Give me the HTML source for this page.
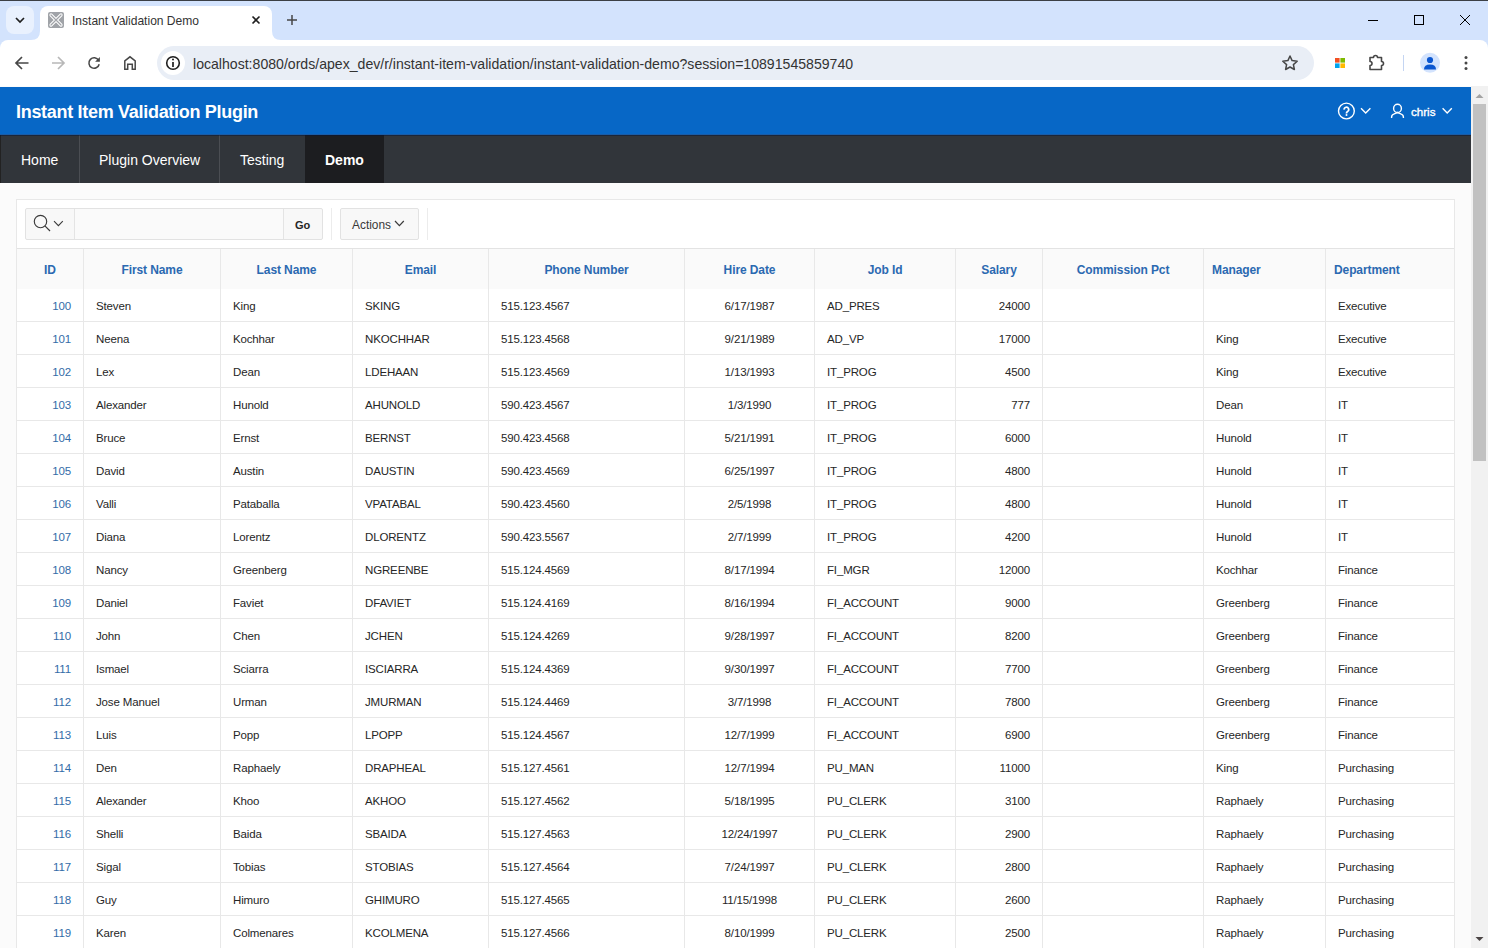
<!DOCTYPE html>
<html><head><meta charset="utf-8"><title>Instant Validation Demo</title>
<style>
*{box-sizing:border-box}
html,body{margin:0;padding:0}
body{width:1488px;height:948px;overflow:hidden;position:relative;background:#fbfbfb;font-family:"Liberation Sans",sans-serif;}
.abs{position:absolute}
/* browser chrome */
#tabstrip{position:absolute;left:0;top:0;width:1488px;height:56px;background:#d3e3fd;border-top:1px solid #3b3f45}
#tabdd{position:absolute;left:6px;top:6px;width:28px;height:28px;border-radius:8px;background:#e9f1fe}
#tab{position:absolute;left:40px;top:6px;width:232px;height:34px;background:#fff;border-radius:8px 8px 0 0}
#toolbar{position:absolute;left:0;top:40px;width:1488px;height:46px;background:#fff;border-radius:8px 8px 0 0}
#omni{position:absolute;left:157px;top:46px;width:1157px;height:34px;border-radius:17px;background:#e9eef6}
#infoc{position:absolute;left:161px;top:51px;width:24px;height:24px;border-radius:12px;background:#fff}
.url{position:absolute;left:193px;top:55px;font-size:14.1px;color:#333;white-space:nowrap;line-height:18px}
.tabtitle{position:absolute;left:72px;top:13px;font-size:12.05px;color:#333;white-space:nowrap;line-height:16px}
/* apex */
#hdr{position:absolute;left:0;top:87px;width:1471px;height:48px;background:#0767c6}
.title{position:absolute;left:16px;top:100px;font-size:18px;letter-spacing:-0.3px;font-weight:700;color:#fff;white-space:nowrap;line-height:24px}
#nav{position:absolute;left:0;top:135px;width:1471px;height:48px;background:#31353a;border-left:1px solid #222}
.nav{position:absolute;top:136px;height:48px;line-height:48px;font-size:14px;color:#fff;white-space:nowrap}
.navsep{position:absolute;top:135px;width:1px;height:48px;background:#4b4e53}
#scroll{position:absolute;left:1471px;top:86px;width:17px;height:862px;background:#f1f1f1}
#thumb{position:absolute;left:1473px;top:104px;width:13px;height:357px;background:#c1c1c1}
#region{position:absolute;left:16px;top:199px;width:1439px;height:760px;background:#fff;border:1px solid #e8e8e8}
.tbar-b{position:absolute;left:17px;top:248px;width:1437px;height:1px;background:#e3e3e3}
.btn{position:absolute;background:#f8f8f8;border:1px solid #e2e2e2;border-radius:2px}
.tsep{position:absolute;top:208px;width:1px;height:32px;background:#ececec}
.hbg{position:absolute;background:#fafafa}
.vl{position:absolute;width:1px;background:#e8e8e8}
.hl{position:absolute;height:1px;background:#e8e8e8}
.th{position:absolute;top:250px;height:40px;line-height:40px;font-size:12px;letter-spacing:-0.1px;font-weight:700;color:#2b69b1;white-space:nowrap}
.td{position:absolute;height:32px;line-height:33px;margin-top:1px;font-size:11.5px;letter-spacing:-0.15px;color:#262626;white-space:nowrap}
.td.id{color:#336ca8}

</style></head><body>
<div id="tabstrip"></div>
<div id="tabdd"></div>
<svg class="abs" style="left:0;top:0" width="1488" height="86" viewBox="0 0 1488 86">
  <!-- tab flares -->
  <path d="M31 40 Q40 40 40 31 L40 40 Z" fill="#fff"/>
  <path d="M281 40 Q272 40 272 31 L272 40 Z" fill="#fff"/>
  <!-- dropdown chevron -->
  <path d="M16 18 L20 22 L24 18" fill="none" stroke="#1f1f1f" stroke-width="1.7"/>
  <!-- new tab plus -->
  <path d="M292 15 V25 M287 20 H297" stroke="#474747" stroke-width="1.5"/>
  <!-- window controls -->
  <path d="M1368 20.5 H1378" stroke="#000" stroke-width="1"/>
  <rect x="1414.5" y="15.5" width="9" height="9" fill="none" stroke="#000" stroke-width="1"/>
  <path d="M1460 15 L1470 25 M1470 15 L1460 25" stroke="#000" stroke-width="1"/>
</svg>
<div id="tab"></div>
<div class="tabtitle">Instant Validation Demo</div>
<div id="toolbar"></div>
<div id="omni"></div>
<div id="infoc"></div>
<svg class="abs" style="left:0;top:0" width="1488" height="86" viewBox="0 0 1488 86">
  <!-- favicon -->
  <rect x="48" y="12" width="16" height="16" rx="2" fill="#a0a3a8"/>
  <path d="M51 15 L61 25 M61 15 L51 25" stroke="#fff" stroke-width="3.2" stroke-linecap="round"/>
  <path d="M51 15 L61 25 M61 15 L51 25" stroke="#a0a3a8" stroke-width="1.2" stroke-linecap="round"/>
  <!-- close x -->
  <path d="M252.5 16.5 L259.5 23.5 M259.5 16.5 L252.5 23.5" stroke="#1f1f1f" stroke-width="1.6"/>
  <!-- back -->
  <path d="M16.5 63 H28.5 M22 57 L16 63 L22 69" fill="none" stroke="#474747" stroke-width="1.7"/>
  <!-- forward -->
  <path d="M52 63 H64 M58 57 L64 63 L58 69" fill="none" stroke="#b8b8b8" stroke-width="1.7"/>
  <!-- reload -->
  <path d="M98.6 60.3 A5.2 5.2 0 1 0 99.2 64.2" fill="none" stroke="#474747" stroke-width="1.5"/>
  <path d="M99.9 57 V61.8 H95.1 Z" fill="#474747"/>
  <!-- home -->
  <path d="M124.8 69.2 V60.8 L130 56.8 L135.2 60.8 V69.2 H132.3 V64.3 H127.7 V69.2 Z" fill="none" stroke="#474747" stroke-width="1.5"/>
  <!-- info -->
  <circle cx="173" cy="63" r="6.3" fill="none" stroke="#1f1f1f" stroke-width="1.6"/>
  <path d="M173 62 V67" stroke="#1f1f1f" stroke-width="1.7"/>
  <circle cx="173" cy="59.6" r="1" fill="#1f1f1f"/>
  <!-- star -->
  <path d="M1290 56 L1292.1 60.6 L1297.2 61.2 L1293.4 64.6 L1294.4 69.5 L1290 67 L1285.6 69.5 L1286.6 64.6 L1282.8 61.2 L1287.9 60.6 Z" fill="none" stroke="#474747" stroke-width="1.5" stroke-linejoin="round"/>
  <!-- ms logo -->
  <rect x="1335" y="58" width="4.6" height="4.6" fill="#f25022"/>
  <rect x="1340.4" y="58" width="4.6" height="4.6" fill="#7fba00"/>
  <rect x="1335" y="63.4" width="4.6" height="4.6" fill="#00a4ef"/>
  <rect x="1340.4" y="63.4" width="4.6" height="4.6" fill="#ffb900"/>
  <!-- puzzle -->
  <path d="M1370 57.5 H1373.5 A2 2 0 0 1 1377.5 57.5 H1381.5 V61.5 A2 2 0 0 1 1381.5 65.5 V69.5 H1370 V65.5 A2 2 0 0 0 1370 61.5 Z" fill="none" stroke="#474747" stroke-width="1.6" stroke-linejoin="round"/>
  <!-- separator -->
  <path d="M1403.5 55 V71" stroke="#c4d5f2" stroke-width="1"/>
  <!-- avatar -->
  <circle cx="1430" cy="62.7" r="10" fill="#d3e3fd"/>
  <circle cx="1430" cy="60" r="3.1" fill="#0b57d0"/>
  <path d="M1424 69.5 Q1424 64.6 1430 64.6 Q1436 64.6 1436 69.5 Z" fill="#0b57d0"/>
  <!-- kebab -->
  <circle cx="1466" cy="57.6" r="1.5" fill="#474747"/>
  <circle cx="1466" cy="63" r="1.5" fill="#474747"/>
  <circle cx="1466" cy="68.4" r="1.5" fill="#474747"/>
</svg>
<div class="url">localhost:8080/ords/apex_dev/r/instant-item-validation/instant-validation-demo?session=10891545859740</div>
<div id="hdr"></div>
<div class="title">Instant Item Validation Plugin</div>
<svg class="abs" style="left:1300px;top:87px" width="171" height="48" viewBox="1300 87 171 48">
  <circle cx="1346.4" cy="111" r="7.9" fill="none" stroke="#fff" stroke-width="1.4"/>
  <path d="M1344.2 109.7 A2.25 2.25 0 1 1 1347.6 111.4 Q1346.5 112 1346.5 113.1 V113.4" fill="none" stroke="#fff" stroke-width="1.7"/>
  <circle cx="1346.5" cy="115" r="1" fill="#fff"/>
  <path d="M1361 108.3 L1365.7 113 L1370.4 108.3" fill="none" stroke="#fff" stroke-width="1.4"/>
  <ellipse cx="1397.5" cy="108.4" rx="3.9" ry="4.1" fill="none" stroke="#fff" stroke-width="1.4"/>
  <path d="M1391.6 118 V117 Q1391.6 114.8 1394.2 113.9 L1397.5 112.6 L1400.8 113.9 Q1403.4 114.8 1403.4 117 V118" fill="none" stroke="#fff" stroke-width="1.4"/>
  <path d="M1442.6 108.3 L1447.2 113 L1451.8 108.3" fill="none" stroke="#fff" stroke-width="1.4"/>
</svg>
<div class="abs" style="left:1411px;top:104px;font-size:11.6px;color:#fff;line-height:16px;-webkit-text-stroke:0.35px #fff">chris</div>
<div id="nav"></div>
<div class="abs" style="left:0;top:134px;width:1471px;height:1px;background:#1a5ca6"></div>
<div class="nav" style="left:21px">Home</div>
<div class="navsep" style="left:79px"></div>
<div class="nav" style="left:99px">Plugin Overview</div>
<div class="navsep" style="left:219px"></div>
<div class="nav" style="left:240px">Testing</div>
<div class="abs" style="left:305px;top:135px;width:79px;height:48px;background:#1c1d20"></div>
<div class="nav" style="left:325px;font-weight:700">Demo</div>
<div class="abs" style="left:0;top:135px;width:1471px;height:1px;background:rgba(0,20,60,0.45)"></div>
<div id="scroll"></div>
<div id="thumb"></div>
<svg class="abs" style="left:1471px;top:86px" width="17" height="862" viewBox="0 0 17 862">
  <path d="M4.5 12 L8.5 8 L12.5 12 Z" fill="#a3a3a3"/>
  <path d="M4.5 851 L8.5 855 L12.5 851 Z" fill="#4a4444"/>
</svg>
<div id="region"></div>
<div class="btn" style="left:25px;top:208px;width:298px;height:32px;background:#f8f8f8"></div>
<div class="abs" style="left:74px;top:209px;width:210px;height:30px;background:#fafafa;border-left:1px solid #e4e4e4;border-right:1px solid #e4e4e4"></div>
<svg class="abs" style="left:25px;top:208px" width="60" height="32" viewBox="25 208 60 32">
  <circle cx="40.5" cy="221.5" r="6.2" fill="none" stroke="#3a3a3a" stroke-width="1.15"/>
  <path d="M44.9 225.9 L50 231" stroke="#3a3a3a" stroke-width="1.2"/>
  <path d="M54 221.2 L58.4 225.6 L62.8 221.2" fill="none" stroke="#3a3a3a" stroke-width="1.1"/>
</svg>
<div class="abs" style="left:295px;top:209px;height:32px;line-height:32px;font-size:11px;font-weight:700;color:#262626">Go</div>
<div class="tsep" style="left:331px"></div>
<div class="btn" style="left:340px;top:208px;width:79px;height:32px"></div>
<div class="abs" style="left:352px;top:209px;height:32px;line-height:32px;font-size:11.9px;color:#383838">Actions</div>
<svg class="abs" style="left:390px;top:215px" width="20" height="16" viewBox="390 215 20 16">
  <path d="M395 221 L399.4 225.6 L403.8 221" fill="none" stroke="#3a3a3a" stroke-width="1.2"/>
</svg>
<div class="tsep" style="left:427px"></div>
<div class="tbar-b"></div>

<div class="tbl">
<div class="hbg" style="left:17px;top:249px;width:1437px;height:40px"></div>
<div class="vl" style="left:83px;top:249px;height:699px"></div>
<div class="vl" style="left:220px;top:249px;height:699px"></div>
<div class="vl" style="left:352px;top:249px;height:699px"></div>
<div class="vl" style="left:488px;top:249px;height:699px"></div>
<div class="vl" style="left:684px;top:249px;height:699px"></div>
<div class="vl" style="left:814px;top:249px;height:699px"></div>
<div class="vl" style="left:955px;top:249px;height:699px"></div>
<div class="vl" style="left:1042px;top:249px;height:699px"></div>
<div class="vl" style="left:1203px;top:249px;height:699px"></div>
<div class="vl" style="left:1325px;top:249px;height:699px"></div>
<div class="hl" style="left:17px;top:321px;width:1437px"></div>
<div class="hl" style="left:17px;top:354px;width:1437px"></div>
<div class="hl" style="left:17px;top:387px;width:1437px"></div>
<div class="hl" style="left:17px;top:420px;width:1437px"></div>
<div class="hl" style="left:17px;top:453px;width:1437px"></div>
<div class="hl" style="left:17px;top:486px;width:1437px"></div>
<div class="hl" style="left:17px;top:519px;width:1437px"></div>
<div class="hl" style="left:17px;top:552px;width:1437px"></div>
<div class="hl" style="left:17px;top:585px;width:1437px"></div>
<div class="hl" style="left:17px;top:618px;width:1437px"></div>
<div class="hl" style="left:17px;top:651px;width:1437px"></div>
<div class="hl" style="left:17px;top:684px;width:1437px"></div>
<div class="hl" style="left:17px;top:717px;width:1437px"></div>
<div class="hl" style="left:17px;top:750px;width:1437px"></div>
<div class="hl" style="left:17px;top:783px;width:1437px"></div>
<div class="hl" style="left:17px;top:816px;width:1437px"></div>
<div class="hl" style="left:17px;top:849px;width:1437px"></div>
<div class="hl" style="left:17px;top:882px;width:1437px"></div>
<div class="hl" style="left:17px;top:915px;width:1437px"></div>
<div class="th" style="left:17px;width:66px;text-align:center">ID</div>
<div class="th" style="left:84px;width:136px;text-align:center">First Name</div>
<div class="th" style="left:221px;width:131px;text-align:center">Last Name</div>
<div class="th" style="left:353px;width:135px;text-align:center">Email</div>
<div class="th" style="left:489px;width:195px;text-align:center">Phone Number</div>
<div class="th" style="left:685px;width:129px;text-align:center">Hire Date</div>
<div class="th" style="left:815px;width:140px;text-align:center">Job Id</div>
<div class="th" style="left:956px;width:86px;text-align:center">Salary</div>
<div class="th" style="left:1043px;width:160px;text-align:center">Commission Pct</div>
<div class="th" style="left:1212px;width:113px;text-align:left">Manager</div>
<div class="th" style="left:1334px;width:120px;text-align:left">Department</div>
<div class="td id" style="top:289px;left:17px;width:54px;text-align:right">100</div>
<div class="td" style="top:289px;left:96px;width:124px">Steven</div>
<div class="td" style="top:289px;left:233px;width:119px">King</div>
<div class="td" style="top:289px;left:365px;width:123px">SKING</div>
<div class="td" style="top:289px;left:501px;width:183px">515.123.4567</div>
<div class="td" style="top:289px;left:685px;width:129px;text-align:center">6/17/1987</div>
<div class="td" style="top:289px;left:827px;width:128px">AD_PRES</div>
<div class="td" style="top:289px;left:956px;width:74px;text-align:right">24000</div>
<div class="td" style="top:289px;left:1338px;width:116px">Executive</div>
<div class="td id" style="top:322px;left:17px;width:54px;text-align:right">101</div>
<div class="td" style="top:322px;left:96px;width:124px">Neena</div>
<div class="td" style="top:322px;left:233px;width:119px">Kochhar</div>
<div class="td" style="top:322px;left:365px;width:123px">NKOCHHAR</div>
<div class="td" style="top:322px;left:501px;width:183px">515.123.4568</div>
<div class="td" style="top:322px;left:685px;width:129px;text-align:center">9/21/1989</div>
<div class="td" style="top:322px;left:827px;width:128px">AD_VP</div>
<div class="td" style="top:322px;left:956px;width:74px;text-align:right">17000</div>
<div class="td" style="top:322px;left:1216px;width:109px">King</div>
<div class="td" style="top:322px;left:1338px;width:116px">Executive</div>
<div class="td id" style="top:355px;left:17px;width:54px;text-align:right">102</div>
<div class="td" style="top:355px;left:96px;width:124px">Lex</div>
<div class="td" style="top:355px;left:233px;width:119px">Dean</div>
<div class="td" style="top:355px;left:365px;width:123px">LDEHAAN</div>
<div class="td" style="top:355px;left:501px;width:183px">515.123.4569</div>
<div class="td" style="top:355px;left:685px;width:129px;text-align:center">1/13/1993</div>
<div class="td" style="top:355px;left:827px;width:128px">IT_PROG</div>
<div class="td" style="top:355px;left:956px;width:74px;text-align:right">4500</div>
<div class="td" style="top:355px;left:1216px;width:109px">King</div>
<div class="td" style="top:355px;left:1338px;width:116px">Executive</div>
<div class="td id" style="top:388px;left:17px;width:54px;text-align:right">103</div>
<div class="td" style="top:388px;left:96px;width:124px">Alexander</div>
<div class="td" style="top:388px;left:233px;width:119px">Hunold</div>
<div class="td" style="top:388px;left:365px;width:123px">AHUNOLD</div>
<div class="td" style="top:388px;left:501px;width:183px">590.423.4567</div>
<div class="td" style="top:388px;left:685px;width:129px;text-align:center">1/3/1990</div>
<div class="td" style="top:388px;left:827px;width:128px">IT_PROG</div>
<div class="td" style="top:388px;left:956px;width:74px;text-align:right">777</div>
<div class="td" style="top:388px;left:1216px;width:109px">Dean</div>
<div class="td" style="top:388px;left:1338px;width:116px">IT</div>
<div class="td id" style="top:421px;left:17px;width:54px;text-align:right">104</div>
<div class="td" style="top:421px;left:96px;width:124px">Bruce</div>
<div class="td" style="top:421px;left:233px;width:119px">Ernst</div>
<div class="td" style="top:421px;left:365px;width:123px">BERNST</div>
<div class="td" style="top:421px;left:501px;width:183px">590.423.4568</div>
<div class="td" style="top:421px;left:685px;width:129px;text-align:center">5/21/1991</div>
<div class="td" style="top:421px;left:827px;width:128px">IT_PROG</div>
<div class="td" style="top:421px;left:956px;width:74px;text-align:right">6000</div>
<div class="td" style="top:421px;left:1216px;width:109px">Hunold</div>
<div class="td" style="top:421px;left:1338px;width:116px">IT</div>
<div class="td id" style="top:454px;left:17px;width:54px;text-align:right">105</div>
<div class="td" style="top:454px;left:96px;width:124px">David</div>
<div class="td" style="top:454px;left:233px;width:119px">Austin</div>
<div class="td" style="top:454px;left:365px;width:123px">DAUSTIN</div>
<div class="td" style="top:454px;left:501px;width:183px">590.423.4569</div>
<div class="td" style="top:454px;left:685px;width:129px;text-align:center">6/25/1997</div>
<div class="td" style="top:454px;left:827px;width:128px">IT_PROG</div>
<div class="td" style="top:454px;left:956px;width:74px;text-align:right">4800</div>
<div class="td" style="top:454px;left:1216px;width:109px">Hunold</div>
<div class="td" style="top:454px;left:1338px;width:116px">IT</div>
<div class="td id" style="top:487px;left:17px;width:54px;text-align:right">106</div>
<div class="td" style="top:487px;left:96px;width:124px">Valli</div>
<div class="td" style="top:487px;left:233px;width:119px">Pataballa</div>
<div class="td" style="top:487px;left:365px;width:123px">VPATABAL</div>
<div class="td" style="top:487px;left:501px;width:183px">590.423.4560</div>
<div class="td" style="top:487px;left:685px;width:129px;text-align:center">2/5/1998</div>
<div class="td" style="top:487px;left:827px;width:128px">IT_PROG</div>
<div class="td" style="top:487px;left:956px;width:74px;text-align:right">4800</div>
<div class="td" style="top:487px;left:1216px;width:109px">Hunold</div>
<div class="td" style="top:487px;left:1338px;width:116px">IT</div>
<div class="td id" style="top:520px;left:17px;width:54px;text-align:right">107</div>
<div class="td" style="top:520px;left:96px;width:124px">Diana</div>
<div class="td" style="top:520px;left:233px;width:119px">Lorentz</div>
<div class="td" style="top:520px;left:365px;width:123px">DLORENTZ</div>
<div class="td" style="top:520px;left:501px;width:183px">590.423.5567</div>
<div class="td" style="top:520px;left:685px;width:129px;text-align:center">2/7/1999</div>
<div class="td" style="top:520px;left:827px;width:128px">IT_PROG</div>
<div class="td" style="top:520px;left:956px;width:74px;text-align:right">4200</div>
<div class="td" style="top:520px;left:1216px;width:109px">Hunold</div>
<div class="td" style="top:520px;left:1338px;width:116px">IT</div>
<div class="td id" style="top:553px;left:17px;width:54px;text-align:right">108</div>
<div class="td" style="top:553px;left:96px;width:124px">Nancy</div>
<div class="td" style="top:553px;left:233px;width:119px">Greenberg</div>
<div class="td" style="top:553px;left:365px;width:123px">NGREENBE</div>
<div class="td" style="top:553px;left:501px;width:183px">515.124.4569</div>
<div class="td" style="top:553px;left:685px;width:129px;text-align:center">8/17/1994</div>
<div class="td" style="top:553px;left:827px;width:128px">FI_MGR</div>
<div class="td" style="top:553px;left:956px;width:74px;text-align:right">12000</div>
<div class="td" style="top:553px;left:1216px;width:109px">Kochhar</div>
<div class="td" style="top:553px;left:1338px;width:116px">Finance</div>
<div class="td id" style="top:586px;left:17px;width:54px;text-align:right">109</div>
<div class="td" style="top:586px;left:96px;width:124px">Daniel</div>
<div class="td" style="top:586px;left:233px;width:119px">Faviet</div>
<div class="td" style="top:586px;left:365px;width:123px">DFAVIET</div>
<div class="td" style="top:586px;left:501px;width:183px">515.124.4169</div>
<div class="td" style="top:586px;left:685px;width:129px;text-align:center">8/16/1994</div>
<div class="td" style="top:586px;left:827px;width:128px">FI_ACCOUNT</div>
<div class="td" style="top:586px;left:956px;width:74px;text-align:right">9000</div>
<div class="td" style="top:586px;left:1216px;width:109px">Greenberg</div>
<div class="td" style="top:586px;left:1338px;width:116px">Finance</div>
<div class="td id" style="top:619px;left:17px;width:54px;text-align:right">110</div>
<div class="td" style="top:619px;left:96px;width:124px">John</div>
<div class="td" style="top:619px;left:233px;width:119px">Chen</div>
<div class="td" style="top:619px;left:365px;width:123px">JCHEN</div>
<div class="td" style="top:619px;left:501px;width:183px">515.124.4269</div>
<div class="td" style="top:619px;left:685px;width:129px;text-align:center">9/28/1997</div>
<div class="td" style="top:619px;left:827px;width:128px">FI_ACCOUNT</div>
<div class="td" style="top:619px;left:956px;width:74px;text-align:right">8200</div>
<div class="td" style="top:619px;left:1216px;width:109px">Greenberg</div>
<div class="td" style="top:619px;left:1338px;width:116px">Finance</div>
<div class="td id" style="top:652px;left:17px;width:54px;text-align:right">111</div>
<div class="td" style="top:652px;left:96px;width:124px">Ismael</div>
<div class="td" style="top:652px;left:233px;width:119px">Sciarra</div>
<div class="td" style="top:652px;left:365px;width:123px">ISCIARRA</div>
<div class="td" style="top:652px;left:501px;width:183px">515.124.4369</div>
<div class="td" style="top:652px;left:685px;width:129px;text-align:center">9/30/1997</div>
<div class="td" style="top:652px;left:827px;width:128px">FI_ACCOUNT</div>
<div class="td" style="top:652px;left:956px;width:74px;text-align:right">7700</div>
<div class="td" style="top:652px;left:1216px;width:109px">Greenberg</div>
<div class="td" style="top:652px;left:1338px;width:116px">Finance</div>
<div class="td id" style="top:685px;left:17px;width:54px;text-align:right">112</div>
<div class="td" style="top:685px;left:96px;width:124px">Jose Manuel</div>
<div class="td" style="top:685px;left:233px;width:119px">Urman</div>
<div class="td" style="top:685px;left:365px;width:123px">JMURMAN</div>
<div class="td" style="top:685px;left:501px;width:183px">515.124.4469</div>
<div class="td" style="top:685px;left:685px;width:129px;text-align:center">3/7/1998</div>
<div class="td" style="top:685px;left:827px;width:128px">FI_ACCOUNT</div>
<div class="td" style="top:685px;left:956px;width:74px;text-align:right">7800</div>
<div class="td" style="top:685px;left:1216px;width:109px">Greenberg</div>
<div class="td" style="top:685px;left:1338px;width:116px">Finance</div>
<div class="td id" style="top:718px;left:17px;width:54px;text-align:right">113</div>
<div class="td" style="top:718px;left:96px;width:124px">Luis</div>
<div class="td" style="top:718px;left:233px;width:119px">Popp</div>
<div class="td" style="top:718px;left:365px;width:123px">LPOPP</div>
<div class="td" style="top:718px;left:501px;width:183px">515.124.4567</div>
<div class="td" style="top:718px;left:685px;width:129px;text-align:center">12/7/1999</div>
<div class="td" style="top:718px;left:827px;width:128px">FI_ACCOUNT</div>
<div class="td" style="top:718px;left:956px;width:74px;text-align:right">6900</div>
<div class="td" style="top:718px;left:1216px;width:109px">Greenberg</div>
<div class="td" style="top:718px;left:1338px;width:116px">Finance</div>
<div class="td id" style="top:751px;left:17px;width:54px;text-align:right">114</div>
<div class="td" style="top:751px;left:96px;width:124px">Den</div>
<div class="td" style="top:751px;left:233px;width:119px">Raphaely</div>
<div class="td" style="top:751px;left:365px;width:123px">DRAPHEAL</div>
<div class="td" style="top:751px;left:501px;width:183px">515.127.4561</div>
<div class="td" style="top:751px;left:685px;width:129px;text-align:center">12/7/1994</div>
<div class="td" style="top:751px;left:827px;width:128px">PU_MAN</div>
<div class="td" style="top:751px;left:956px;width:74px;text-align:right">11000</div>
<div class="td" style="top:751px;left:1216px;width:109px">King</div>
<div class="td" style="top:751px;left:1338px;width:116px">Purchasing</div>
<div class="td id" style="top:784px;left:17px;width:54px;text-align:right">115</div>
<div class="td" style="top:784px;left:96px;width:124px">Alexander</div>
<div class="td" style="top:784px;left:233px;width:119px">Khoo</div>
<div class="td" style="top:784px;left:365px;width:123px">AKHOO</div>
<div class="td" style="top:784px;left:501px;width:183px">515.127.4562</div>
<div class="td" style="top:784px;left:685px;width:129px;text-align:center">5/18/1995</div>
<div class="td" style="top:784px;left:827px;width:128px">PU_CLERK</div>
<div class="td" style="top:784px;left:956px;width:74px;text-align:right">3100</div>
<div class="td" style="top:784px;left:1216px;width:109px">Raphaely</div>
<div class="td" style="top:784px;left:1338px;width:116px">Purchasing</div>
<div class="td id" style="top:817px;left:17px;width:54px;text-align:right">116</div>
<div class="td" style="top:817px;left:96px;width:124px">Shelli</div>
<div class="td" style="top:817px;left:233px;width:119px">Baida</div>
<div class="td" style="top:817px;left:365px;width:123px">SBAIDA</div>
<div class="td" style="top:817px;left:501px;width:183px">515.127.4563</div>
<div class="td" style="top:817px;left:685px;width:129px;text-align:center">12/24/1997</div>
<div class="td" style="top:817px;left:827px;width:128px">PU_CLERK</div>
<div class="td" style="top:817px;left:956px;width:74px;text-align:right">2900</div>
<div class="td" style="top:817px;left:1216px;width:109px">Raphaely</div>
<div class="td" style="top:817px;left:1338px;width:116px">Purchasing</div>
<div class="td id" style="top:850px;left:17px;width:54px;text-align:right">117</div>
<div class="td" style="top:850px;left:96px;width:124px">Sigal</div>
<div class="td" style="top:850px;left:233px;width:119px">Tobias</div>
<div class="td" style="top:850px;left:365px;width:123px">STOBIAS</div>
<div class="td" style="top:850px;left:501px;width:183px">515.127.4564</div>
<div class="td" style="top:850px;left:685px;width:129px;text-align:center">7/24/1997</div>
<div class="td" style="top:850px;left:827px;width:128px">PU_CLERK</div>
<div class="td" style="top:850px;left:956px;width:74px;text-align:right">2800</div>
<div class="td" style="top:850px;left:1216px;width:109px">Raphaely</div>
<div class="td" style="top:850px;left:1338px;width:116px">Purchasing</div>
<div class="td id" style="top:883px;left:17px;width:54px;text-align:right">118</div>
<div class="td" style="top:883px;left:96px;width:124px">Guy</div>
<div class="td" style="top:883px;left:233px;width:119px">Himuro</div>
<div class="td" style="top:883px;left:365px;width:123px">GHIMURO</div>
<div class="td" style="top:883px;left:501px;width:183px">515.127.4565</div>
<div class="td" style="top:883px;left:685px;width:129px;text-align:center">11/15/1998</div>
<div class="td" style="top:883px;left:827px;width:128px">PU_CLERK</div>
<div class="td" style="top:883px;left:956px;width:74px;text-align:right">2600</div>
<div class="td" style="top:883px;left:1216px;width:109px">Raphaely</div>
<div class="td" style="top:883px;left:1338px;width:116px">Purchasing</div>
<div class="td id" style="top:916px;left:17px;width:54px;text-align:right">119</div>
<div class="td" style="top:916px;left:96px;width:124px">Karen</div>
<div class="td" style="top:916px;left:233px;width:119px">Colmenares</div>
<div class="td" style="top:916px;left:365px;width:123px">KCOLMENA</div>
<div class="td" style="top:916px;left:501px;width:183px">515.127.4566</div>
<div class="td" style="top:916px;left:685px;width:129px;text-align:center">8/10/1999</div>
<div class="td" style="top:916px;left:827px;width:128px">PU_CLERK</div>
<div class="td" style="top:916px;left:956px;width:74px;text-align:right">2500</div>
<div class="td" style="top:916px;left:1216px;width:109px">Raphaely</div>
<div class="td" style="top:916px;left:1338px;width:116px">Purchasing</div>
</div>
</body></html>
